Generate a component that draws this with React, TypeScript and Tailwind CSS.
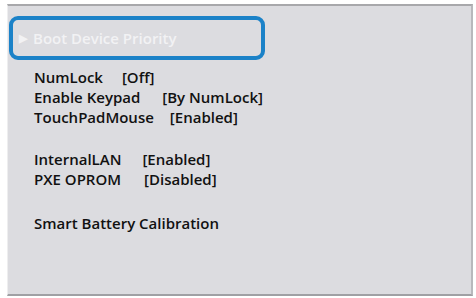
const rows = [
  { label: "NumLock", value: "[Off]", gap: "ml-[19px]" },
  { label: "Enable Keypad", value: "[By NumLock]", gap: "ml-[22px]" },
  { label: "TouchPadMouse", value: "[Enabled]", gap: "ml-[16px]" },
];

const rows2 = [
  { label: "InternalLAN", value: "[Enabled]", gap: "ml-[21px]" },
  { label: "PXE OPROM", value: "[Disabled]", gap: "ml-[23px]" },
];

const Row = ({ label, value, gap }: { label: string; value: string; gap: string }) => (
  <div className="flex h-[20px] items-center">
    <span>{label}</span>
    <span className={gap}>{value}</span>
  </div>
);

export default function App() {
  return (
    <div
      className="w-[476px] h-[298px] bg-white pt-[4px] pl-[7px] overflow-hidden"
      style={{ fontFamily: '"Open Sans", "Noto Sans", sans-serif' }}
    >
      <div className="w-[466px] h-[292px] bg-[#dcdce0] border-t-2 border-[#a8a8ab] border-r-2 border-r-[#b8b8bc] border-b-2 border-b-[#a0a0a4] border-l border-l-[#eeeeef] flex flex-col">
        <div className="ml-[1px] mt-[10px] w-[256px] h-[44px] rounded-[9px] border-4 border-[#1b82c8] flex items-center pl-[6px] text-[#f2f2f4] text-[15px] font-semibold">
          <span className="text-[11px] mr-[6px] leading-none -mt-[2px]">▶</span>
          <span>Boot Device Priority</span>
        </div>
        <div className="pl-[26px] mt-[7px] text-[15px] font-semibold text-[#111111]">
          {rows.map((r) => (
            <Row key={r.label} {...r} />
          ))}
          <div className="h-[22px]" />
          {rows2.map((r) => (
            <Row key={r.label} {...r} />
          ))}
          <div className="h-[24px]" />
          <div className="flex h-[20px] items-center">Smart Battery Calibration</div>
        </div>
      </div>
    </div>
  );
}
